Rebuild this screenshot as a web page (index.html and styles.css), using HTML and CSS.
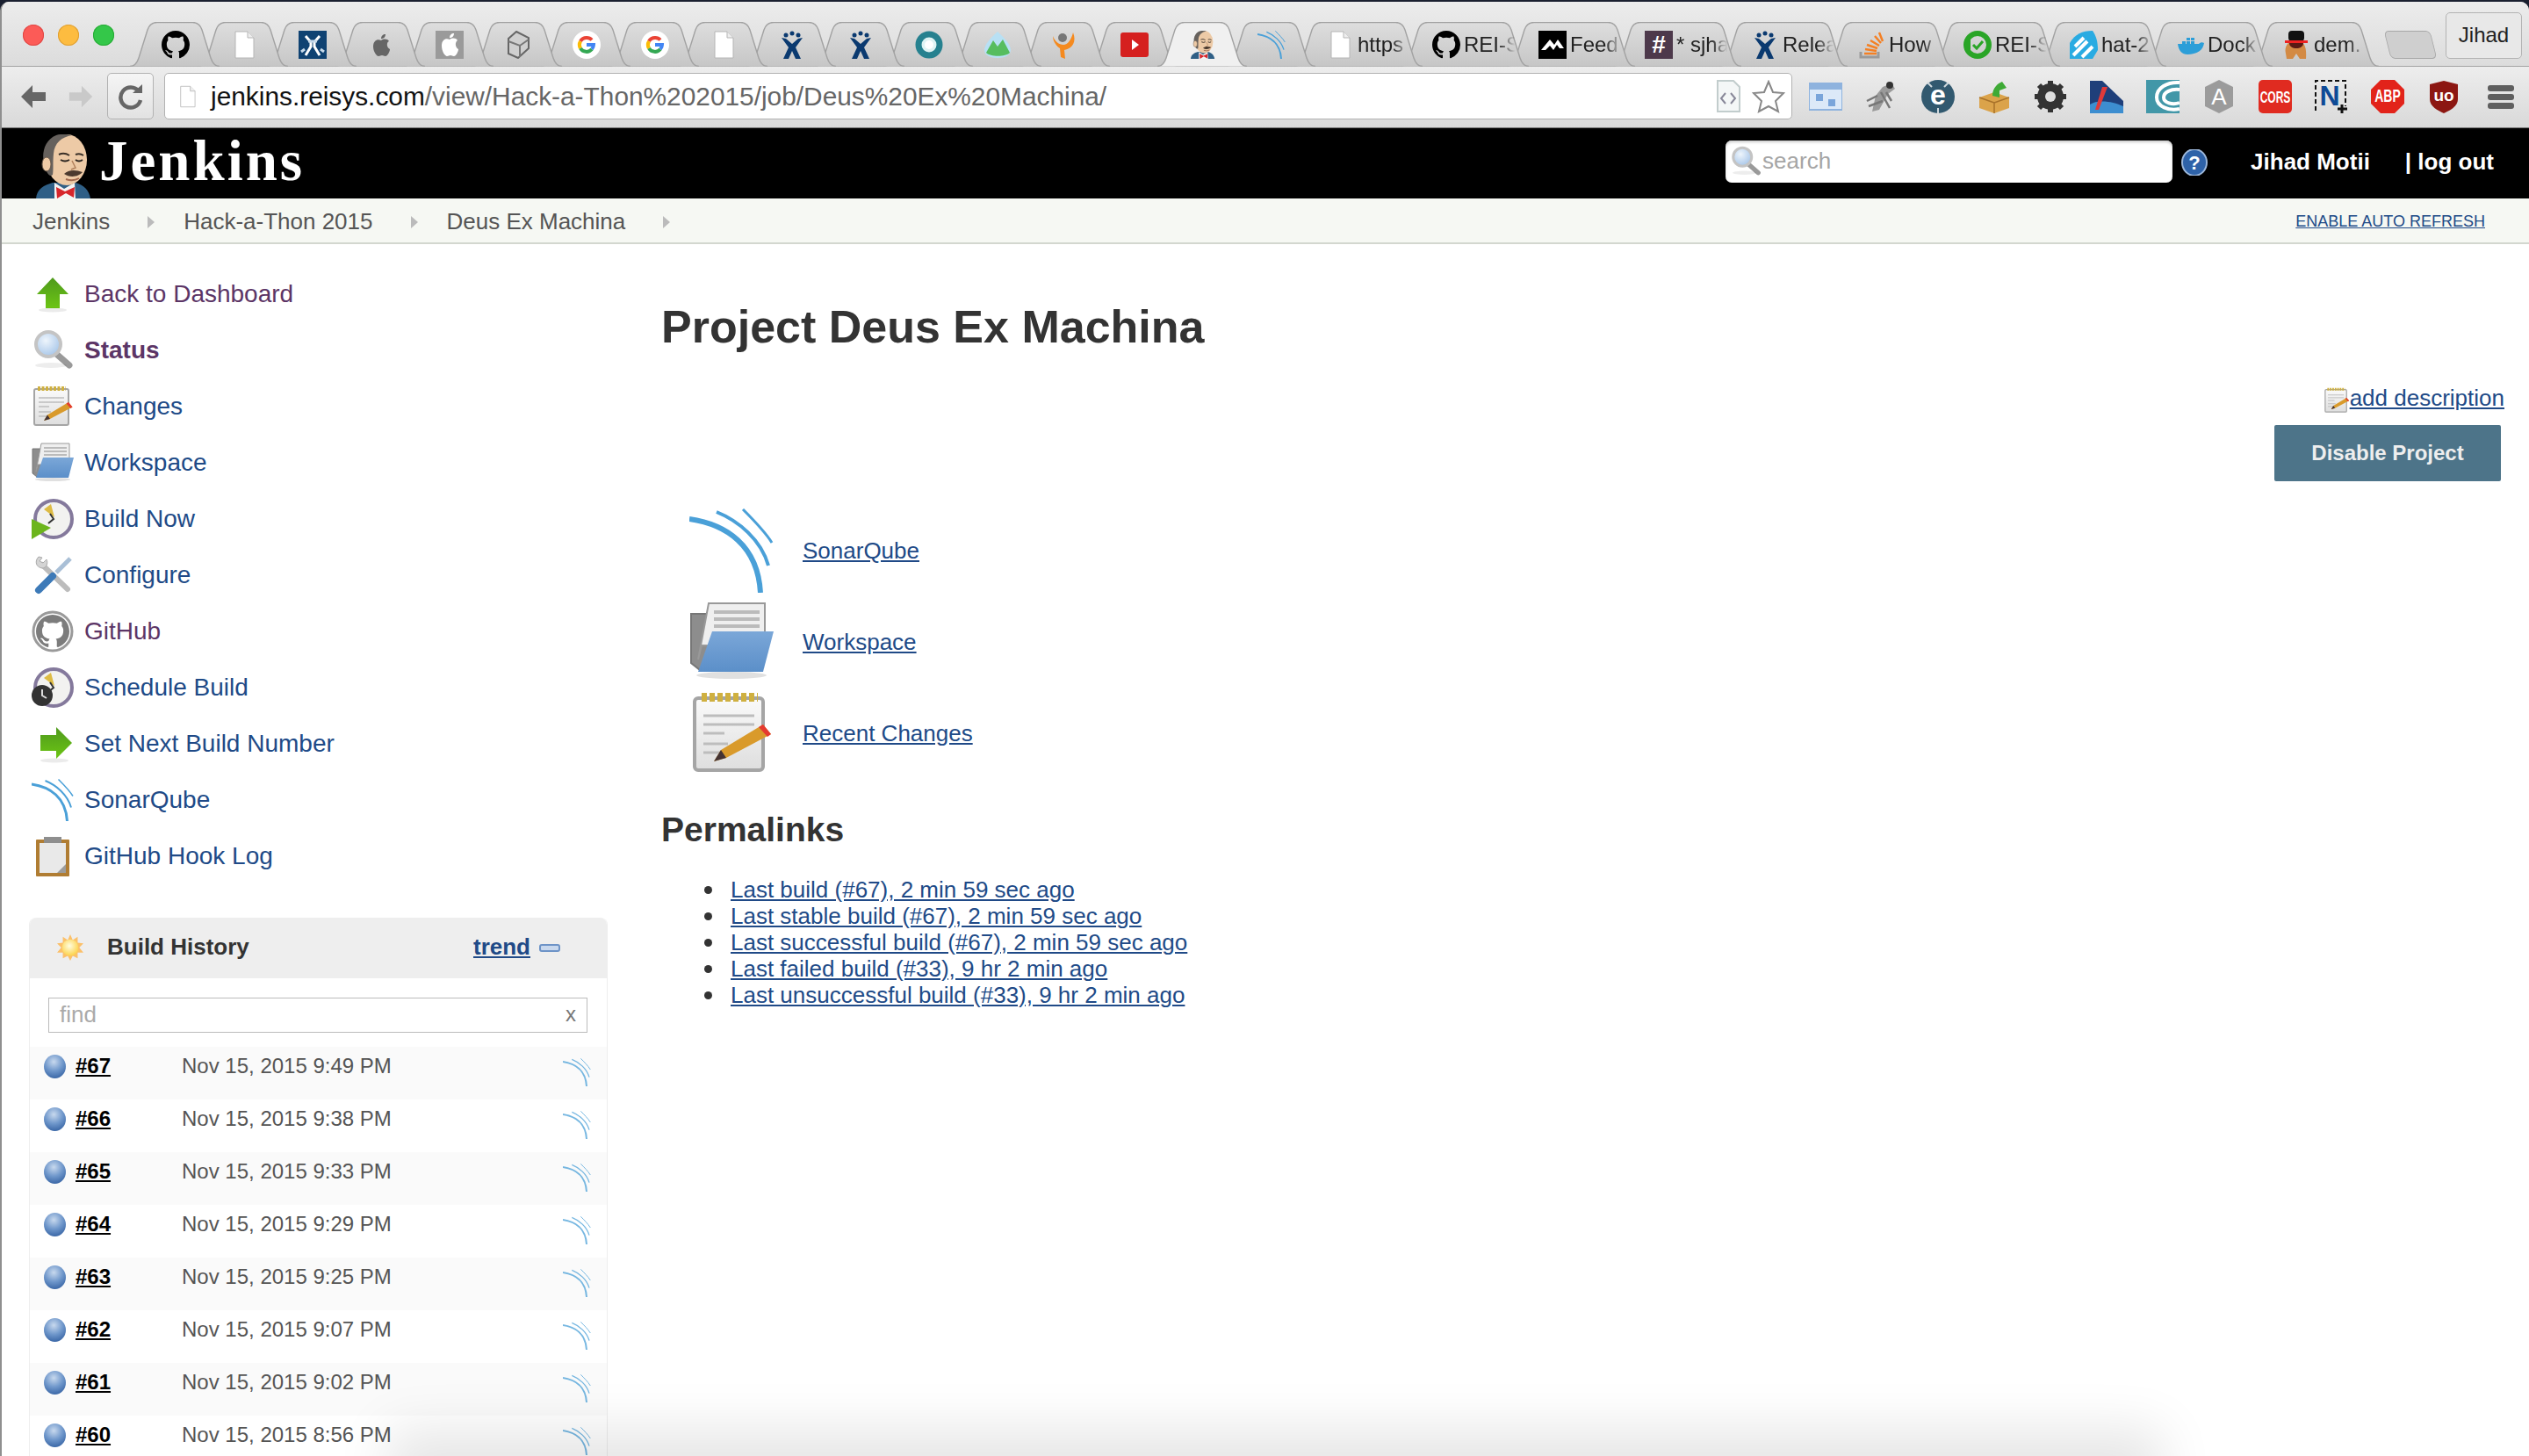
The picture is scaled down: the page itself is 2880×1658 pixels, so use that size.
FILE: index.html
```html
<!DOCTYPE html>
<html lang="en">
<head>
<meta charset="utf-8">
<title>Deus Ex Machina [Jenkins]</title>
<link rel="stylesheet" href="styles.css">
</head>
<body>
<svg class="defs" xmlns="http://www.w3.org/2000/svg">
  <defs>
    <linearGradient id="g-tab" x1="0" y1="0" x2="0" y2="1"><stop offset="0" stop-color="#dedede"/><stop offset="1" stop-color="#c6c6c6"/></linearGradient>
    <linearGradient id="g-green" x1="0" y1="0" x2="0" y2="1"><stop offset="0" stop-color="#4f9a1d"/><stop offset="1" stop-color="#6cc514"/></linearGradient>
    <linearGradient id="g-blue" x1="0" y1="0" x2="0" y2="1"><stop offset="0" stop-color="#7ba7d8"/><stop offset="1" stop-color="#5b8fc9"/></linearGradient>
    <linearGradient id="g-page" x1="0" y1="0" x2="0" y2="1"><stop offset="0" stop-color="#fafafa"/><stop offset="1" stop-color="#dedede"/></linearGradient>
    <radialGradient id="g-lens" cx=".4" cy=".35" r=".7"><stop offset="0" stop-color="#eef5fc"/><stop offset="1" stop-color="#a4c4e8"/></radialGradient>
    <radialGradient id="g-sun" cx=".45" cy=".4" r=".6"><stop offset="0" stop-color="#fffde0"/><stop offset="1" stop-color="#fcd34d"/></radialGradient>

    <symbol id="tab-s" viewBox="0 0 102 51"><path d="M0 50.5C5 50.5 8 47 10 41L20 9C22 3 25 .5 31 .5H71C77 .5 80 3 82 9L92 41C94 47 97 50.5 102 50.5" /></symbol>
    <symbol id="tab-w" viewBox="0 0 146 51"><path d="M0 50.5C5 50.5 8 47 10 41L20 9C22 3 25 .5 31 .5H115C121 .5 124 3 126 9L136 41C138 47 141 50.5 146 50.5" /></symbol>

    <symbol id="gh" viewBox="0 0 16 16"><path d="M8 0C3.58 0 0 3.58 0 8c0 3.54 2.29 6.53 5.47 7.59.4.07.55-.17.55-.38 0-.19-.01-.82-.01-1.49-2.01.37-2.53-.49-2.69-.94-.09-.23-.48-.94-.82-1.13-.28-.15-.68-.52-.01-.53.63-.01 1.08.58 1.23.82.72 1.21 1.87.87 2.33.66.07-.52.28-.87.51-1.07-1.78-.2-3.64-.89-3.64-3.95 0-.87.31-1.59.82-2.15-.08-.2-.36-1.02.08-2.12 0 0 .67-.21 2.2.82.64-.18 1.32-.27 2-.27.68 0 1.36.09 2 .27 1.53-1.04 2.2-.82 2.2-.82.44 1.1.16 1.92.08 2.12.51.56.82 1.27.82 2.15 0 3.07-1.87 3.75-3.65 3.95.29.25.54.73.54 1.48 0 1.07-.01 1.93-.01 2.2 0 .21.15.46.55.38A8.013 8.013 0 0016 8c0-4.42-3.58-8-8-8z"/></symbol>
    <symbol id="doc" viewBox="0 0 32 32"><path d="M6 1H20L27 8V31H6Z" fill="#fff" stroke="#b5b5b5"/><path d="M20 1V8H27" fill="#eee" stroke="#b5b5b5"/></symbol>
    <symbol id="jira" viewBox="0 0 32 32" fill="#0b3a70"><circle cx="9" cy="5" r="2.5"/><circle cx="16" cy="3" r="2.5"/><circle cx="23" cy="5" r="2.5"/><path d="M4 8L9 9L16 15L23 9L28 8L20 19L26 32H20L16 23L12 32H6L12 19Z"/></symbol>
    <symbol id="goog" viewBox="0 0 32 32"><circle cx="16" cy="16" r="16" fill="#fff"/><path d="M16 8A8 8 0 0 0 9 12" fill="none" stroke="#ea4335" stroke-width="4"/><path d="M9 12A8 8 0 0 0 9 20" fill="none" stroke="#fbbc05" stroke-width="4"/><path d="M9 20A8 8 0 0 0 22 21" fill="none" stroke="#34a853" stroke-width="4"/><path d="M22 21A8 8 0 0 0 24 16H16" fill="none" stroke="#4285f4" stroke-width="4"/><path d="M16 8A8 8 0 0 1 22 10.5" fill="none" stroke="#ea4335" stroke-width="4"/></symbol>
    <symbol id="sonar" viewBox="0 0 96 96" fill="none" stroke="#4aa0d8"><path d="M0 12C42 18 78 42 81 96" stroke-width="6"/><path d="M31 4C56 14 82 36 90 65" stroke-width="4"/><path d="M61 1C72 12 86 26 94 39" stroke-width="3"/></symbol>
    <symbol id="butler" viewBox="0 0 66 73">
      <path d="M1 73C2 62 10 58 20 55L46 55C56 58 61 63 63 73Z" fill="#2f5f86"/>
      <path d="M22 55L33 62L45 55L46 73H22Z" fill="#f4f4f4"/>
      <path d="M24 60L34 65L45 60L44 72L35 67L25 73Z" fill="#d7262b"/>
      <ellipse cx="36" cy="29" rx="23" ry="29" fill="#edcaa6"/>
      <path d="M14 44C6 30 7 8 24 1C30-1 38 0 42 1C30 3 22 10 21 22C20 32 21 40 20 46C18 48 16 47 14 44Z" fill="#66615d"/>
      <ellipse cx="13" cy="34" rx="5" ry="8" fill="#edcaa6" stroke="#6d5b4c"/>
      <path d="M27 23Q33 20 39 24M46 23Q51 21 55 24" fill="none" stroke="#3a3028" stroke-width="2"/>
      <path d="M29 29Q34 32 39 29M46 29Q50 32 54 29" fill="none" stroke="#2a2420" stroke-width="2"/>
      <path d="M42 30L46 38L41 40" fill="none" stroke="#b0805c" stroke-width="1.500"/>
      <path d="M33 45C38 40 46 40 54 43C50 48 40 50 33 45Z" fill="#4b3a2f"/>
      <path d="M35 51Q43 54 50 50" fill="none" stroke="#a36a50" stroke-width="2"/>
    </symbol>

    <symbol id="up" viewBox="0 0 48 48"><path d="M24 5L42 24H32V40H16V24H6Z" fill="url(#g-green)"/><ellipse cx="24" cy="42" rx="16" ry="2.500" fill="#000" opacity=".08"/></symbol>
    <symbol id="right" viewBox="0 0 48 48"><path d="M46 23L28 5V14H10V32H28V41Z" fill="url(#g-green)"/><ellipse cx="26" cy="43" rx="16" ry="2.500" fill="#000" opacity=".08"/></symbol>
    <symbol id="mag" viewBox="0 0 48 48"><path d="M27 27L43 41" stroke="#9a9a9a" stroke-width="7" stroke-linecap="round"/><circle cx="19" cy="17" r="14" fill="url(#g-lens)" stroke="#c4c4c4" stroke-width="4"/><ellipse cx="22" cy="41" rx="18" ry="3" fill="#000" opacity=".07"/></symbol>
    <symbol id="note" viewBox="0 0 48 48"><rect x="3" y="4" width="39" height="41" rx="2" fill="url(#g-page)" stroke="#a5a5a5" stroke-width="2"/><path d="M7 3.500H39" stroke="#cfb040" stroke-width="5" stroke-dasharray="3 1.500"/><path d="M8 14H37M8 19H37M8 24H20M8 30H22M8 35H18" stroke="#bdbdbd" stroke-width="1.500"/><path d="M14 40L18 33.500L42 19L46.500 24.500L21 38Z" fill="#d99a2b"/><path d="M42 19L46.500 24.500L44.500 26L39.500 20.500Z" fill="#e53a30"/><path d="M14 40L18 33.500L21 38Z" fill="#433"/></symbol>
    <symbol id="folder" viewBox="0 0 48 48"><path d="M1 8H12V40H6L1 36Z" fill="#8d8d8d" stroke="#777"/><path d="M11 2H43V26H7L5 34Z" fill="#efefef" stroke="#999"/><path d="M14 7H40M14 11H40M14 15H40" stroke="#bbb" stroke-width="2"/><path d="M13 18H48L42 41H5Z" fill="url(#g-blue)"/><ellipse cx="24" cy="43" rx="20" ry="2" fill="#000" opacity=".12"/></symbol>
    <symbol id="clock" viewBox="0 0 48 48"><circle cx="25" cy="24" r="21" fill="#f2f2f0" stroke="#84799c" stroke-width="4"/><path d="M22 7L26 22L14 13Z" fill="#ddbb44"/><path d="M21 18L25 24L19 29" fill="none" stroke="#333" stroke-width="2"/></symbol>
    <symbol id="tools" viewBox="0 0 48 48"><path d="M12 12L41 40" stroke="#bcbcbc" stroke-width="6" fill="none" stroke-linecap="round"/><path d="M8 3C3 8 5 15 12 16C17 16 19 10 17 6L13 10L9 8L12 4Z" fill="#d4d4d4" stroke="#aaa"/><path d="M44 5L28 21" stroke="#a9bfd6" stroke-width="5"/><path d="M24 25L8 41" stroke="#3d7ab8" stroke-width="8" stroke-linecap="round"/></symbol>
    <symbol id="ghring" viewBox="0 0 48 48"><circle cx="24" cy="24" r="22" fill="#fff" stroke="#9a9a9a" stroke-width="3"/><use href="#gh" x="5" y="5" width="38" height="38" fill="#7c7c7c"/></symbol>
    <symbol id="clip" viewBox="0 0 48 48"><rect x="5" y="5" width="38" height="42" fill="#b07d33" rx="1"/><rect x="9" y="9" width="30" height="34" fill="#e9e9e9"/><path d="M14 2H34V9H14Z" fill="#8e8e8e"/><path d="M39 33V43H29Z" fill="#9c9c9c"/></symbol>
    <symbol id="sun" viewBox="0 0 32 32"><path d="M16 0L19 7L25 3L25 10L32 11L27 16L32 22L25 22L25 29L19 26L16 32L13 26L7 29L7 22L0 22L5 16L0 11L7 10L7 3L13 7Z" fill="#fbc06a"/><circle cx="16" cy="16" r="10" fill="url(#g-sun)"/></symbol>
  </defs>
</svg>

<div class="window">
  <header class="tabstrip">
    <div class="traffic">
      <i class="light red"></i><i class="light amber"></i><i class="light green"></i>
    </div>
    <nav class="tabs">
      <div class="tab wide"><svg class="tab-shape"><use href="#tab-w"/></svg><svg class="fav" viewBox="0 0 32 32"><path d="M4 26C2 18 6 12 16 9C26 12 28 20 27 32H20L16 26L12 32H5Z" fill="#d38a44"/><path d="M8 14C8 18 12 20 16 20C20 20 24 18 24 14V13H8Z" fill="#5a1a14"/><rect x="7" y="0" width="18" height="12" rx="4" fill="#111"/><rect x="3" y="11" width="26" height="3" fill="#e22"/></svg><span class="tab-text">dem.</span></div>
      <div class="tab wide"><svg class="tab-shape"><use href="#tab-w"/></svg><svg class="fav" viewBox="0 0 32 32"><path d="M2 15H26C28 13 30 13 32 14C31 22 24 27 13 27C7 27 3 23 2 15Z" fill="#2c9ed8"/><path d="M7 12H11V15H7ZM12 12H16V15H12ZM17 12H21V15H17ZM12 8H16V11H12ZM17 8H21V11H17Z" fill="#2c9ed8"/></svg><span class="tab-text">Dock</span></div>
      <div class="tab wide"><svg class="tab-shape"><use href="#tab-w"/></svg><svg class="fav" viewBox="0 0 32 32"><path d="M0 32V14C6 4 14 0 26 0C30 6 32 12 32 22L26 32Z" fill="#29abe2"/><path d="M4 28L20 12M6 18L16 8M14 30L26 18" stroke="#fff" stroke-width="4"/></svg><span class="tab-text">hat-2</span></div>
      <div class="tab wide"><svg class="tab-shape"><use href="#tab-w"/></svg><svg class="fav" viewBox="0 0 32 32"><circle cx="16" cy="16" r="13" fill="none" stroke="#2aa527" stroke-width="6"/><path d="M0 16L8 10V22Z" fill="#2aa527"/><path d="M11 16L15 20L22 12" fill="none" stroke="#2aa527" stroke-width="3"/></svg><span class="tab-text">REI-S</span></div>
      <div class="tab wide"><svg class="tab-shape"><use href="#tab-w"/></svg><svg class="fav" viewBox="0 0 32 32"><path d="M4 24V30H24V24" fill="none" stroke="#9a9a9a" stroke-width="3"/><path d="M8 26H22M9 21L22 23M11 16L23 20M15 11L25 17M20 6L27 14M25 2L29 12" stroke="#f48024" stroke-width="2.500"/></svg><span class="tab-text">How</span></div>
      <div class="tab wide"><svg class="tab-shape"><use href="#tab-w"/></svg><svg class="fav"><use href="#jira"/></svg><span class="tab-text">Relea</span></div>
      <div class="tab wide"><svg class="tab-shape"><use href="#tab-w"/></svg><svg class="fav" viewBox="0 0 32 32"><rect width="32" height="32" fill="#4d394b"/><text class="fav-hash" x="16" y="25">#</text></svg><span class="tab-text">* sjha</span></div>
      <div class="tab wide"><svg class="tab-shape"><use href="#tab-w"/></svg><svg class="fav" viewBox="0 0 32 32"><rect width="32" height="32" fill="#000"/><path d="M3 22L13 10L18 16L22 10L29 20H24L21 16L17 22L13 17L8 22Z" fill="#fff"/></svg><span class="tab-text">Feed</span></div>
      <div class="tab wide"><svg class="tab-shape"><use href="#tab-w"/></svg><svg class="fav"><use href="#gh"/></svg><span class="tab-text">REI-S</span></div>
      <div class="tab wide"><svg class="tab-shape"><use href="#tab-w"/></svg><svg class="fav"><use href="#doc"/></svg><span class="tab-text">https</span></div>
      <div class="tab"><svg class="tab-shape"><use href="#tab-s"/></svg><svg class="fav"><use href="#sonar"/></svg></div>
      <div class="tab active"><svg class="tab-shape"><use href="#tab-s"/></svg><svg class="fav"><use href="#butler"/></svg></div>
      <div class="tab"><svg class="tab-shape"><use href="#tab-s"/></svg><svg class="fav" viewBox="0 0 32 32"><rect y="2" width="32" height="28" rx="3" fill="#d5201f"/><path d="M13 10L21 16L13 22Z" fill="#fff"/></svg></div>
      <div class="tab"><svg class="tab-shape"><use href="#tab-s"/></svg><svg class="fav" viewBox="0 0 32 32"><circle cx="12" cy="8" r="5" fill="#777"/><path d="M24 2C28 12 24 20 14 22L15 32L10 30L9 20C3 16 1 10 1 6C3 12 8 16 13 16C18 16 22 10 24 2Z" fill="#f58a1f"/></svg></div>
      <div class="tab"><svg class="tab-shape"><use href="#tab-s"/></svg><svg class="fav" viewBox="0 0 32 32"><path d="M16 1C24 8 31 16 31 22C31 28 24 31 16 31C8 31 1 28 1 22C1 16 8 8 16 1Z" fill="#b8e0f4"/><path d="M3 25L11 11L16 18L22 10L30 25C25 30 8 30 3 25Z" fill="#56bd5f"/></svg></div>
      <div class="tab"><svg class="tab-shape"><use href="#tab-s"/></svg><svg class="fav" viewBox="0 0 32 32"><circle cx="16" cy="16" r="12" fill="#dff3f3" stroke="#26818f" stroke-width="7"/><circle cx="16" cy="16" r="5" fill="#fff"/></svg></div>
      <div class="tab"><svg class="tab-shape"><use href="#tab-s"/></svg><svg class="fav"><use href="#jira"/></svg></div>
      <div class="tab"><svg class="tab-shape"><use href="#tab-s"/></svg><svg class="fav"><use href="#jira"/></svg></div>
      <div class="tab"><svg class="tab-shape"><use href="#tab-s"/></svg><svg class="fav"><use href="#doc"/></svg></div>
      <div class="tab"><svg class="tab-shape"><use href="#tab-s"/></svg><svg class="fav"><use href="#goog"/></svg></div>
      <div class="tab"><svg class="tab-shape"><use href="#tab-s"/></svg><svg class="fav"><use href="#goog"/></svg></div>
      <div class="tab"><svg class="tab-shape"><use href="#tab-s"/></svg><svg class="fav" viewBox="0 0 32 32"><path d="M14 1L28 8V20L16 31L5 26V9Z" fill="#cfcfcf" stroke="#666" stroke-width="2"/><path d="M5 12L18 17L28 10M18 17V30" fill="none" stroke="#777" stroke-width="2"/></svg></div>
      <div class="tab"><svg class="tab-shape"><use href="#tab-s"/></svg><svg class="fav" viewBox="0 0 32 32"><rect width="32" height="32" fill="#9a9a9a"/><path d="M16 10C12 8 7 10 7 17C7 24 11 29 13 29C15 29 15 28 17 28C19 28 19 29 21 29C23 29 26 24 26 21C22 19 22 13 25 11C23 8 19 8 16 10Z" fill="#fff"/><path d="M16 8C16 5 18 3 21 3C21 6 19 8 16 8Z" fill="#fff"/></svg></div>
      <div class="tab"><svg class="tab-shape"><use href="#tab-s"/></svg><svg class="fav" viewBox="0 0 32 32"><path d="M16 11C12 9 7 11 7 18C7 24 11 29 13 29C15 29 15 28 17 28C19 28 19 29 21 29C23 29 26 24 26 21C22 19 22 13 25 12C23 9 19 9 16 11Z" fill="#666"/><path d="M16 9C16 6 18 4 21 4C21 7 19 9 16 9Z" fill="#666"/></svg></div>
      <div class="tab"><svg class="tab-shape"><use href="#tab-s"/></svg><svg class="fav" viewBox="0 0 32 32"><rect width="32" height="32" fill="#0f4272"/><path d="M8 6L14 13V18L8 28M24 6L18 13V18L24 28" stroke="#fff" stroke-width="3" fill="none"/><path d="M11 12H21M3 24L7 21M29 24L25 21" stroke="#c6d9ea" stroke-width="3"/></svg></div>
      <div class="tab"><svg class="tab-shape"><use href="#tab-s"/></svg><svg class="fav"><use href="#doc"/></svg></div>
      <div class="tab"><svg class="tab-shape"><use href="#tab-s"/></svg><svg class="fav"><use href="#gh"/></svg></div>
    </nav>
    <div class="newtab"></div>
    <div class="profile">Jihad</div>
  </header>

  <div class="toolbar">
    <svg class="nav-arrow" viewBox="0 0 32 30"><path d="M15 2L2 15L15 28V20H30V10H15Z" fill="#666"/></svg>
    <svg class="nav-arrow fwd" viewBox="0 0 32 30"><path d="M17 2L30 15L17 28V20H2V10H17Z" fill="#c9c9c9"/></svg>
    <div class="reload"><svg viewBox="0 0 30 30" class="reload-icon"><path d="M24 9A11.500 11.500 0 1 0 26 19" fill="none" stroke="#666" stroke-width="4.500"/><path d="M17 11H28V1Z" fill="#666"/></svg></div>
    <div class="omnibox">
      <svg class="omni-doc"><use href="#doc"/></svg>
      <span class="url"><b class="host">jenkins.reisys.com</b>/view/Hack-a-Thon%202015/job/Deus%20Ex%20Machina/</span>
      <svg class="omni-code" viewBox="0 0 28 38"><path d="M2 1H20L27 8V36H2Z" fill="#f4f7f7" stroke="#c2cdcd" stroke-width="2"/><path d="M11 15L6 21L11 27M17 15L22 21L17 27" fill="none" stroke="#889" stroke-width="2"/></svg>
      <svg class="omni-star" viewBox="0 0 38 38"><path d="M19 2L24 14L36 15L27 24L30 36L19 30L8 36L11 24L2 15L14 14Z" fill="#fff" stroke="#888" stroke-width="2"/></svg>
    </div>
    <div class="extensions">
      <svg class="ext" viewBox="0 0 38 38"><rect y="4" width="38" height="30" fill="#dce9f8" stroke="#8fb3de" stroke-width="2"/><rect y="4" width="38" height="7" fill="#8fb3de"/><path d="M8 16H16V24H8ZM22 22H30V30H22Z" fill="#7aa5da"/></svg>
      <svg class="ext" viewBox="0 0 38 38"><path d="M20 8L30 4L34 10L26 16L16 34L8 36L12 18Z" fill="#9a9a9a"/><circle cx="28" cy="6" r="4" fill="#333"/><path d="M2 24L14 18M4 30L20 24M18 14L28 32M24 14L30 24" stroke="#777" stroke-width="2.500"/></svg>
      <svg class="ext" viewBox="0 0 38 38"><circle cx="19" cy="19" r="19" fill="#32596f"/><path d="M7 3L12 8M31 3L26 8M19 32V38" stroke="#cfd8dd" stroke-width="2"/><text class="ext-e" x="19" y="28">e</text></svg>
      <svg class="ext" viewBox="0 0 38 38"><path d="M19 14L36 20V32L19 38L2 32V20Z" fill="#dba34a"/><path d="M19 26L36 20M19 26L2 20M19 26V38" stroke="#a8722a" stroke-width="1.500"/><path d="M17 18C17 9 23 4 28 2L33 9L25 12L25 20Z" fill="#3eaa35"/></svg>
      <svg class="ext" viewBox="0 0 38 38"><circle cx="19" cy="19" r="11" fill="none" stroke="#333" stroke-width="8"/><path d="M19 1V37M1 19H37M6 6L32 32M32 6L6 32" stroke="#333" stroke-width="6"/><circle cx="19" cy="19" r="6" fill="#dedede"/></svg>
      <svg class="ext" viewBox="0 0 38 38"><path d="M0 38V1H14L38 24V38Z" fill="#1f3f7a"/><path d="M0 28C8 22 26 24 38 30V38H0Z" fill="#3d8ed0"/><path d="M14 8L20 8L10 34H6Z" fill="#e03a3a"/></svg>
      <svg class="ext" viewBox="0 0 38 38"><rect width="38" height="38" fill="#4297a8"/><path d="M38 3C24 2 12 9 12 20C12 30 26 36 38 33M38 11C28 10 20 14 20 20C20 26 30 29 38 26" fill="none" stroke="#fff" stroke-width="4"/></svg>
      <svg class="ext" viewBox="0 0 38 38"><path d="M19 0L35 8V30L19 38L3 30V8Z" fill="#9b9b9b"/><text class="ext-a" x="19" y="28">A</text></svg>
      <svg class="ext" viewBox="0 0 38 38"><rect width="38" height="38" rx="5" fill="#e02b20"/><text class="ext-cors" x="19" y="16" transform="scale(1 1.600)">CORS</text></svg>
      <svg class="ext" viewBox="0 0 38 38"><path d="M1 35V1H35V30" fill="none" stroke="#111" stroke-width="2" stroke-dasharray="5 3"/><path d="M31 28V38M26 33H37" stroke="#111" stroke-width="3"/><text class="ext-n" x="17" y="29">N</text></svg>
      <svg class="ext" viewBox="0 0 38 38"><path d="M11 0H27L38 11V27L27 38H11L0 27V11Z" fill="#e2231a"/><text class="ext-abp" x="19" y="16.500" transform="scale(1 1.500)">ABP</text></svg>
      <svg class="ext" viewBox="0 0 38 38"><path d="M19 1L35 5V22C35 30 26 35 19 38C12 35 3 30 3 22V5Z" fill="#8c1712"/><text class="ext-ub" x="19" y="24">uo</text></svg>
      <svg class="ext" viewBox="0 0 38 38"><g fill="#5f5f5f"><rect x="5" y="6" width="30" height="7" rx="3"/><rect x="5" y="16" width="30" height="7" rx="3"/><rect x="5" y="26" width="30" height="7" rx="3"/></g></svg>
    </div>
  </div>

  <div class="jenkins-head">
    <svg class="logo-head"><use href="#butler"/></svg>
    <span class="logo-text">Jenkins</span>
    <div class="searchbox">
      <svg class="search-mag"><use href="#mag"/></svg>
      <span class="search-ph">search</span>
    </div>
    <svg class="help" viewBox="0 0 30 30"><ellipse cx="15" cy="15" rx="14" ry="15" fill="#2e62a8" stroke="#9cb7da" stroke-width="2"/><text class="help-q" x="15" y="23">?</text></svg>
    <span class="user">Jihad Motii</span>
    <span class="logout">| log out</span>
  </div>

  <div class="crumbs">
    <span class="crumb">Jenkins</span><i class="crumb-arrow"></i>
    <span class="crumb">Hack-a-Thon 2015</span><i class="crumb-arrow"></i>
    <span class="crumb">Deus Ex Machina</span><i class="crumb-arrow"></i>
    <a class="autorefresh">ENABLE AUTO REFRESH</a>
  </div>

  <div class="page">
    <aside class="side">
      <ul class="tasks">
        <li class="task visited"><svg class="task-icon"><use href="#up"/></svg>Back to Dashboard</li>
        <li class="task visited current"><svg class="task-icon"><use href="#mag"/></svg>Status</li>
        <li class="task"><svg class="task-icon"><use href="#note"/></svg>Changes</li>
        <li class="task"><svg class="task-icon"><use href="#folder"/></svg>Workspace</li>
        <li class="task"><svg class="task-icon" viewBox="0 0 48 48"><use href="#clock" width="48" height="48"/><path d="M0 24L22 34L0 47Z" fill="#6cb51c"/></svg>Build Now</li>
        <li class="task"><svg class="task-icon"><use href="#tools"/></svg>Configure</li>
        <li class="task visited"><svg class="task-icon"><use href="#ghring"/></svg>GitHub</li>
        <li class="task"><svg class="task-icon" viewBox="0 0 48 48"><use href="#clock" width="48" height="48"/><circle cx="12" cy="33" r="12" fill="#333"/><path d="M12 26V33L17 36" stroke="#ddd" stroke-width="2" fill="none"/></svg>Schedule Build</li>
        <li class="task"><svg class="task-icon"><use href="#right"/></svg>Set Next Build Number</li>
        <li class="task"><svg class="task-icon"><use href="#sonar"/></svg>SonarQube</li>
        <li class="task"><svg class="task-icon"><use href="#clip"/></svg>GitHub Hook Log</li>
      </ul>

      <section class="history">
        <div class="history-head">
          <svg class="sun"><use href="#sun"/></svg>
          <span class="history-title">Build History</span>
          <a class="trend">trend</a>
          <i class="minus"></i>
        </div>
        <div class="find"><span class="find-ph">find</span><span class="find-x">x</span></div>
        <div class="build"><i class="ball"></i><a class="build-no">#67</a><span class="build-date">Nov 15, 2015 9:49 PM</span><svg class="build-sonar"><use href="#sonar"/></svg></div>
        <div class="build"><i class="ball"></i><a class="build-no">#66</a><span class="build-date">Nov 15, 2015 9:38 PM</span><svg class="build-sonar"><use href="#sonar"/></svg></div>
        <div class="build"><i class="ball"></i><a class="build-no">#65</a><span class="build-date">Nov 15, 2015 9:33 PM</span><svg class="build-sonar"><use href="#sonar"/></svg></div>
        <div class="build"><i class="ball"></i><a class="build-no">#64</a><span class="build-date">Nov 15, 2015 9:29 PM</span><svg class="build-sonar"><use href="#sonar"/></svg></div>
        <div class="build"><i class="ball"></i><a class="build-no">#63</a><span class="build-date">Nov 15, 2015 9:25 PM</span><svg class="build-sonar"><use href="#sonar"/></svg></div>
        <div class="build"><i class="ball"></i><a class="build-no">#62</a><span class="build-date">Nov 15, 2015 9:07 PM</span><svg class="build-sonar"><use href="#sonar"/></svg></div>
        <div class="build"><i class="ball"></i><a class="build-no">#61</a><span class="build-date">Nov 15, 2015 9:02 PM</span><svg class="build-sonar"><use href="#sonar"/></svg></div>
        <div class="build"><i class="ball"></i><a class="build-no">#60</a><span class="build-date">Nov 15, 2015 8:56 PM</span><svg class="build-sonar"><use href="#sonar"/></svg></div>
      </section>
    </aside>

    <main class="main">
      <h1 class="title">Project Deus Ex Machina</h1>
      <div class="desc-row"><svg class="desc-icon"><use href="#note"/></svg><a class="link">add description</a></div>
      <div class="btn-row"><button class="disable">Disable Project</button></div>
      <ul class="mainlinks">
        <li class="mainlink"><svg class="main-icon"><use href="#sonar"/></svg><a class="link">SonarQube</a></li>
        <li class="mainlink"><svg class="main-icon"><use href="#folder"/></svg><a class="link">Workspace</a></li>
        <li class="mainlink"><svg class="main-icon"><use href="#note"/></svg><a class="link">Recent Changes</a></li>
      </ul>
      <h2 class="perma-title">Permalinks</h2>
      <ul class="permalinks">
        <li class="perma"><a class="link">Last build (#67), 2 min 59 sec ago</a></li>
        <li class="perma"><a class="link">Last stable build (#67), 2 min 59 sec ago</a></li>
        <li class="perma"><a class="link">Last successful build (#67), 2 min 59 sec ago</a></li>
        <li class="perma"><a class="link">Last failed build (#33), 9 hr 2 min ago</a></li>
        <li class="perma"><a class="link">Last unsuccessful build (#33), 9 hr 2 min ago</a></li>
      </ul>
    </main>
  </div>
  <div class="window-shadow"></div>
</div>
</body>
</html>
```

FILE: styles.css
```css
* { box-sizing: border-box; }
html, body { margin: 0; padding: 0; }
body {
  height: 1658px;
  overflow: hidden;
  background: #1a2030;
  font-family: "Liberation Sans", Arial, sans-serif;
  color: #333;
}
ul { margin: 0; padding: 0; list-style: none; }
.defs { display: block; width: 0; height: 0; }

.window {
  position: relative;
  height: 1656px;
  margin-top: 2px;
  background: #fff;
  border-left: 2px solid #8f8f8f;
  border-radius: 10px 10px 0 0;
  overflow: hidden;
  display: flex;
  flex-direction: column;
}

/* Tab strip */
.tabstrip {
  flex: none;
  height: 73px;
  display: flex;
  align-items: flex-end;
  background: linear-gradient(#ececec, #dcdcdc);
  position: relative;
}
.traffic {
  position: absolute;
  left: 24px;
  top: 26px;
  display: flex;
  gap: 16px;
}
.light { width: 24px; height: 24px; border-radius: 50%; display: block; }
.light.red { background: #fc5b57; box-shadow: inset 0 0 0 1px #df4744; }
.light.amber { background: #fdbc40; box-shadow: inset 0 0 0 1px #de9f34; }
.light.green { background: #34c749; box-shadow: inset 0 0 0 1px #27aa35; }
.tabs {
  flex: none;
  width: 2564px;
  margin-left: 146px;
  display: flex;
  flex-direction: row-reverse;
  justify-content: flex-end;
}
.tab {
  flex: none;
  position: relative;
  width: 102px;
  height: 51px;
  margin-right: -24px;
  margin-bottom: -1px;
  display: flex;
  align-items: center;
}
.tab:first-child { margin-right: 0; }
.tab.wide { width: 146px; margin-right: -25px; }
.tab-shape {
  position: absolute;
  left: 0;
  top: 0;
  width: 100%;
  height: 51px;
  fill: url(#g-tab);
  stroke: #a2a2a2;
  stroke-width: 1.4;
}
.tab.active { z-index: 1; }
.tab.active .tab-shape { fill: #f0f0f0; }
.fav { position: relative; flex: none; width: 32px; height: 32px; margin-left: 36px; }
.tab-text {
  position: relative;
  margin-left: 4px;
  width: 68px;
  white-space: nowrap;
  font-size: 24px;
  line-height: 32px;
  color: #222;
  -webkit-mask-image: linear-gradient(90deg, #000 58%, transparent 86%);
  mask-image: linear-gradient(90deg, #000 58%, transparent 86%);
}
.fav-hash { font: bold 28px "Liberation Sans", sans-serif; fill: #fff; text-anchor: middle; }
.newtab {
  flex: none;
  width: 62px;
  height: 32px;
  margin: 0 0 8px 2px;
  background: #cfcfcf;
  border: 1px solid #a8a8a8;
  border-radius: 6px;
  transform: skewX(14deg) scaleX(.85);
}
.profile {
  position: absolute;
  left: 2783px;
  top: 12px;
  width: 87px;
  height: 53px;
  border: 1px solid #b3b3b3;
  border-radius: 5px;
  background: #e8e8e8;
  font-size: 24px;
  line-height: 49px;
  text-align: center;
  color: #222;
}

/* Toolbar */
.toolbar {
  flex: none;
  height: 71px;
  display: flex;
  align-items: center;
  padding: 0 0 2px 20px;
  background: linear-gradient(#ededed, #d9d9d9);
  border-top: 1px solid #a4a4a4;
  border-bottom: 1px solid #777;
}
.nav-arrow { flex: none; width: 32px; height: 30px; }
.nav-arrow.fwd { margin-left: 23px; width: 30px; }
.reload {
  flex: none;
  width: 53px;
  height: 53px;
  margin-left: 15px;
  display: flex;
  align-items: center;
  justify-content: center;
  background: linear-gradient(#f5f5f5, #e2e2e2);
  border: 1px solid #b2b2b2;
  border-radius: 5px;
}
.reload-icon { width: 30px; height: 30px; }
.omnibox {
  flex: none;
  width: 1854px;
  height: 53px;
  margin-left: 12px;
  display: flex;
  align-items: center;
  padding: 0 7px 0 13px;
  background: #fff;
  border: 1px solid #b2b2b2;
  border-radius: 5px;
}
.omni-doc { flex: none; width: 25px; height: 32px; }
.url {
  margin-left: 14px;
  font-size: 29.85px;
  white-space: nowrap;
  color: #666;
}
.host { font-weight: normal; color: #111; }
.omni-code { flex: none; width: 28px; height: 38px; margin-left: auto; }
.omni-star { flex: none; width: 38px; height: 38px; margin-left: 13px; }
.extensions { flex: none; display: flex; gap: 26px; margin-left: 19px; }
.ext { flex: none; width: 38px; height: 38px; }
.ext-e { font: bold 32px "Liberation Sans", sans-serif; fill: #fff; text-anchor: middle; }
.ext-a { font: 26px "Liberation Sans", sans-serif; fill: #fff; text-anchor: middle; }
.ext-cors { font: bold 12px "Liberation Sans", sans-serif; fill: #fff; text-anchor: middle; }
.ext-n { font: bold 32px "Liberation Sans", sans-serif; fill: #0e4a96; text-anchor: middle; }
.ext-abp { font: bold 14px "Liberation Sans", sans-serif; fill: #fff; text-anchor: middle; }
.ext-ub { font: bold 19px "Liberation Sans", sans-serif; fill: #fff; text-anchor: middle; }

/* Jenkins header */
.jenkins-head {
  flex: none;
  height: 80px;
  display: flex;
  align-items: center;
  padding-right: 40px;
  background: #000;
  color: #fff;
}
.logo-head { flex: none; width: 66px; height: 73px; margin-left: 38px; align-self: flex-end; }
.logo-text {
  margin-left: 7px;
  font: bold 65px/80px "Liberation Serif", serif;
  letter-spacing: 3px;
  color: #fff;
  position: relative;
  top: -3px;
}
.searchbox {
  flex: none;
  width: 509px;
  height: 48px;
  margin-left: auto;
  margin-bottom: 4px;
  display: flex;
  align-items: center;
  padding-left: 5px;
  background: #fff;
  border-radius: 7px;
  box-shadow: inset 0 2px 3px #ccc;
}
.search-mag { flex: none; width: 36px; height: 36px; }
.search-ph { margin-left: 1px; margin-bottom: 2px; font-size: 26px; color: #a5a5a5; }
.help { flex: none; width: 30px; height: 30px; margin: 0 0 2px 10px; }
.help-q { font: bold 22px "Liberation Sans", sans-serif; fill: #fff; text-anchor: middle; }
.user { margin: 0 0 3px 49px; font-size: 26px; font-weight: bold; color: #fff; white-space: nowrap; }
.logout { margin: 0 0 3px 40px; font-size: 26px; font-weight: bold; color: #fff; white-space: nowrap; }

/* Breadcrumbs */
.crumbs {
  flex: none;
  height: 52px;
  display: flex;
  align-items: center;
  padding: 2px 50px 0 35px;
  background: #f6f8f3;
  border-bottom: 2px solid #d3d7cf;
}
.crumb { font-size: 26px; color: #555; white-space: nowrap; }
.crumb-arrow {
  flex: none;
  width: 0;
  height: 0;
  margin: 2px 33px 0 43px;
  border-left: 8px solid #bbb;
  border-top: 7px solid transparent;
  border-bottom: 7px solid transparent;
}
.autorefresh {
  margin-left: auto;
  font-size: 18px;
  color: #204a87;
  text-decoration: underline;
  white-space: nowrap;
}

/* Page */
.page { flex: 1; min-height: 0; display: flex; overflow: hidden; }
.side { flex: none; width: 690px; padding: 25px 0 0 31px; }
.tasks { margin-bottom: 38px; }
.task {
  height: 64px;
  display: flex;
  align-items: center;
  gap: 12px;
  padding-left: 3px;
  font-size: 28px;
  color: #204a87;
}
.task.visited { color: #5c3566; }
.task.current { font-weight: bold; }
.task-icon { flex: none; width: 48px; height: 48px; }

.history {
  width: 659px;
  border: 1px solid #eee;
  border-top: 0;
  border-radius: 8px 8px 0 0;
}
.history-head {
  height: 69px;
  display: flex;
  align-items: center;
  padding: 0 53px 2px 31px;
  background: #eee;
  border-radius: 8px 8px 0 0;
}
.sun { flex: none; width: 30px; height: 30px; }
.history-title { margin-left: 27px; font-size: 26px; font-weight: bold; color: #333; }
.trend { margin-left: auto; font-size: 26px; font-weight: bold; color: #204a87; text-decoration: underline; }
.minus {
  flex: none;
  width: 24px;
  height: 9px;
  margin: 2px 0 0 10px;
  border-radius: 3px;
  background: #c8d8ee;
  border: 2px solid #6d93c7;
}
.find {
  width: 614px;
  height: 40px;
  margin: 22px 0 16px 21px;
  display: flex;
  align-items: center;
  justify-content: space-between;
  padding: 0 12px 2px;
  border: 1px solid #bbb;
  font-size: 26px;
}
.find-ph { color: #aaa; }
.find-x { font-size: 24px; color: #777; }
.build {
  height: 60px;
  display: flex;
  align-items: flex-start;
  padding: 8px 18px 0 16px;
}
.build:nth-of-type(odd) { background: #fafafa; }
.ball {
  flex: none;
  width: 25px;
  height: 27px;
  margin-top: 1px;
  border-radius: 50%;
  background: radial-gradient(circle at 45% 30%, #c8d9ee 0, #6f97cb 45%, #2e5c9e 90%);
}
.build-no {
  flex: none;
  width: 121px;
  margin-left: 11px;
  font-size: 24px;
  line-height: 28px;
  font-weight: bold;
  color: #000;
  text-decoration: underline;
  text-underline-offset: 2px;
}
.build-date { font-size: 24px; line-height: 28px; color: #555; white-space: nowrap; }
.build-sonar { flex: none; width: 32px; height: 32px; margin: 5px 0 0 auto; opacity: .75; }

.main { flex: 1; min-width: 0; padding: 64px 0 0 61px; }
.title { margin: 0; font-size: 52px; line-height: 60px; font-weight: bold; color: #333; }
.link { color: #204a87; text-decoration: underline; }
.desc-row {
  height: 30px;
  margin-top: 36px;
  display: flex;
  align-items: center;
  justify-content: flex-end;
  padding-right: 28px;
  font-size: 26px;
}
.desc-icon { flex: none; width: 30px; height: 30px; margin-top: 6px; }
.btn-row { display: flex; justify-content: flex-end; margin-top: 16px; padding-right: 32px; }
.disable {
  width: 258px;
  height: 64px;
  padding: 0;
  border: 0;
  border-radius: 2px;
  background: #4d7489;
  font: bold 24px "Liberation Sans", sans-serif;
  color: #eee;
}
.mainlinks { margin-top: 27px; }
.mainlink {
  height: 104px;
  display: flex;
  align-items: center;
  gap: 33px;
  padding-left: 32px;
  font-size: 26px;
}
.main-icon { flex: none; width: 96px; height: 96px; }
.perma-title { margin: 34px 0 0; font-size: 39px; line-height: 48px; font-weight: bold; color: #333; }
.permalinks { margin-top: 29px; padding-left: 79px; font-size: 26px; line-height: 30px; }
.perma { position: relative; }
.perma::before {
  content: "";
  position: absolute;
  left: -30px;
  top: 11px;
  width: 9px;
  height: 9px;
  border-radius: 50%;
  background: #333;
}

.window-shadow {
  position: absolute;
  left: 470px;
  width: 1960px;
  bottom: -30px;
  height: 30px;
  box-shadow: 0 0 60px 30px rgba(0, 0, 0, .1);
}
```
